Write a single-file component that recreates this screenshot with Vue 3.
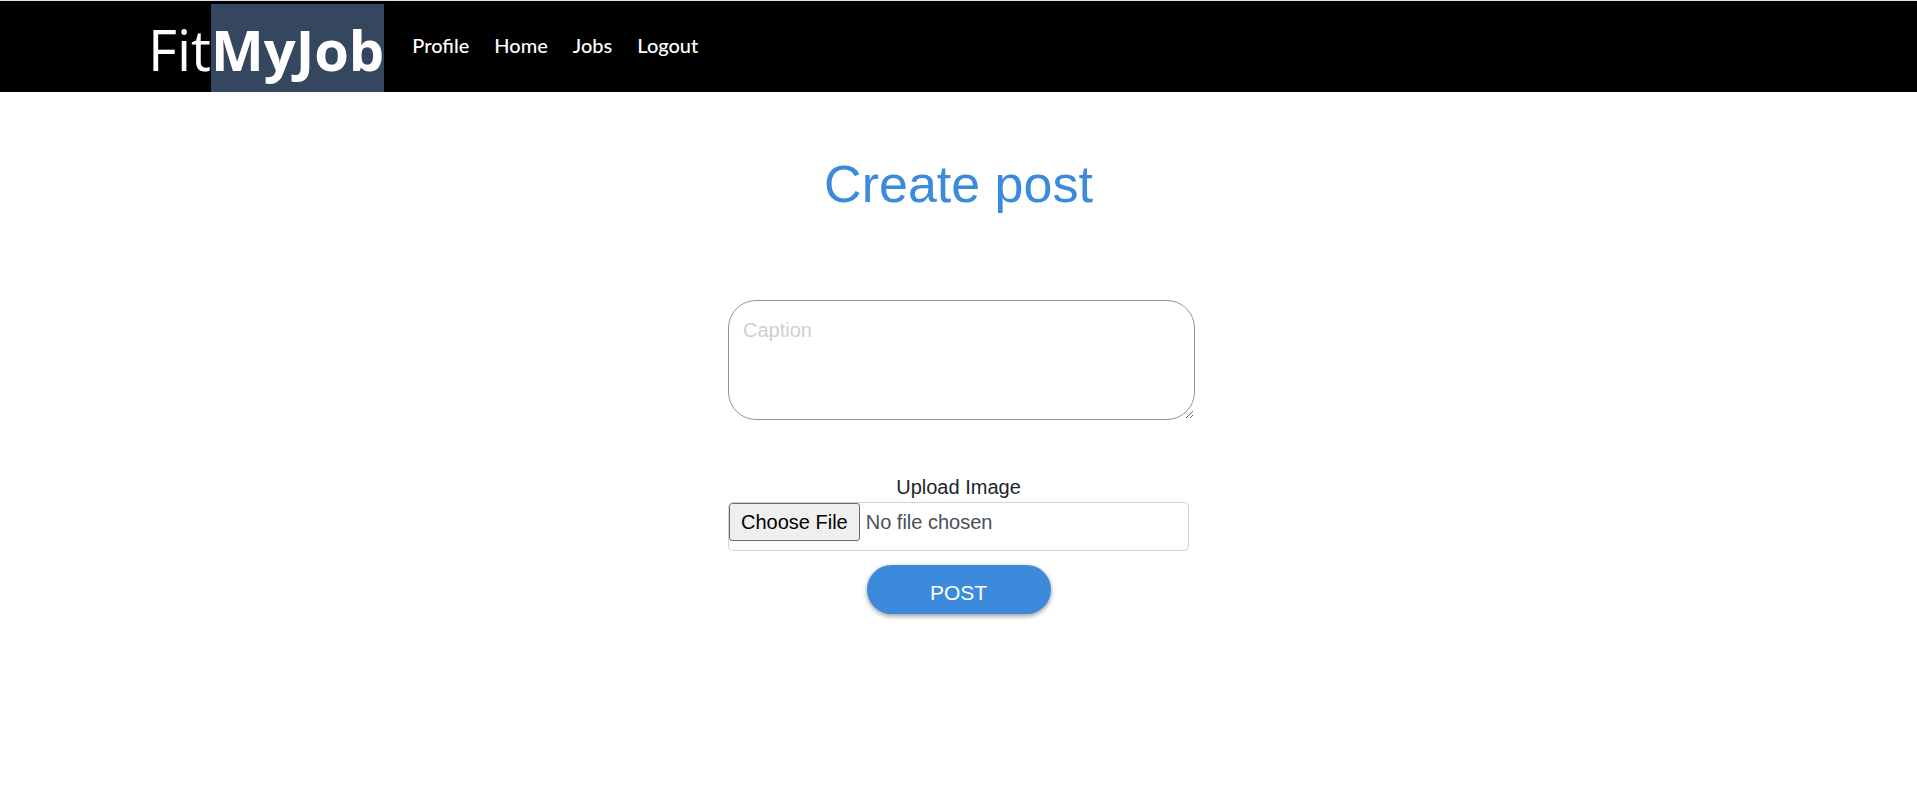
<script setup>
import { ref } from 'vue'

const links = ['Profile', 'Home', 'Jobs', 'Logout']
const caption = ref('')
</script>

<template>
  <div class="page">
    <header class="bar">
      <a class="brand" href="#"><span class="light">Fit</span><strong class="mark">MyJob</strong></a>
      <nav class="links">
        <a v-for="link in links" :key="link" href="#">{{ link }}</a>
      </nav>
    </header>
    <main class="content">
      <h1>Create post</h1>
      <form class="form" @submit.prevent>
        <textarea v-model="caption" class="caption" placeholder="Caption" aria-label="Caption"></textarea>
        <label class="label" for="image">Upload Image</label>
        <input id="image" class="file" type="file" />
        <button class="post" type="submit">POST</button>
      </form>
    </main>
  </div>
</template>

<style>
body {
  margin: 0;
  background: #fff;
}
</style>

<style scoped>
.page {
  font-family: Arial, "Liberation Sans", sans-serif;
  font-size: 20px;
  color: #212529;
}

.bar {
  box-sizing: border-box;
  display: flex;
  align-items: flex-start;
  gap: 28px;
  height: 92px;
  padding: 3px 8% 0 148px;
  border-top: 1px solid #dee2e6;
  background: #000;
}

.brand {
  display: flex;
  font-family: "Segoe UI", "Open Sans", sans-serif;
  font-size: 56px;
  color: #fff;
  text-decoration: none;
}

.brand span,
.brand strong {
  height: 88px;
  line-height: 90px;
}

.light {
  font-weight: 400;
}

.mark {
  font-weight: 700;
  background: #35475f;
}

.links {
  display: flex;
  gap: 25px;
  padding-top: 27px;
  font-family: "Gill Sans", "Gill Sans MT", Lato, sans-serif;
  font-size: 20px;
  font-weight: 500;
  line-height: 28px;
}

.links a {
  color: #fff;
  text-decoration: none;
}

.content {
  display: flex;
  flex-direction: column;
  align-items: center;
  padding: 60px 16px;
}

h1 {
  margin: 0 0 84px;
  font-size: 52px;
  font-weight: 400;
  line-height: 64px;
  color: #3b8adc;
}

.form {
  display: flex;
  flex-direction: column;
  align-items: center;
  width: 100%;
  max-width: 461px;
}

.caption {
  box-sizing: border-box;
  align-self: flex-start;
  width: calc(100% + 6px);
  height: 120px;
  padding: 14px;
  border: 1px solid #949494;
  border-radius: 28px;
  outline: 0;
  background: #fff;
  font: inherit;
  line-height: 30px;
  color: #495057;
  resize: both;
}

.caption::placeholder {
  color: #d0d0d0;
  opacity: 1;
}

.label {
  margin-top: 52px;
  line-height: 30px;
}

.file {
  box-sizing: border-box;
  width: 100%;
  height: 49px;
  padding: 0;
  border: 1px solid #ced4da;
  border-radius: 5px;
  background: #fff;
  font: inherit;
  line-height: 32px;
  color: #495057;
}

.file::file-selector-button {
  box-sizing: border-box;
  height: 38px;
  padding: 0 11px;
  border: 1px solid #6b6b6b;
  border-radius: 3px;
  margin-right: 6px;
  background: #efefef;
  font: inherit;
  color: #000;
}

.post {
  width: 184px;
  height: 49px;
  margin-top: 14px;
  padding: 6px 0 0;
  border: 0;
  border-radius: 25px;
  background: #3b8adc;
  box-shadow: 0 2px 5px rgba(0, 0, 0, 0.4);
  font: inherit;
  font-size: 21px;
  color: #fff;
  cursor: pointer;
}
</style>
